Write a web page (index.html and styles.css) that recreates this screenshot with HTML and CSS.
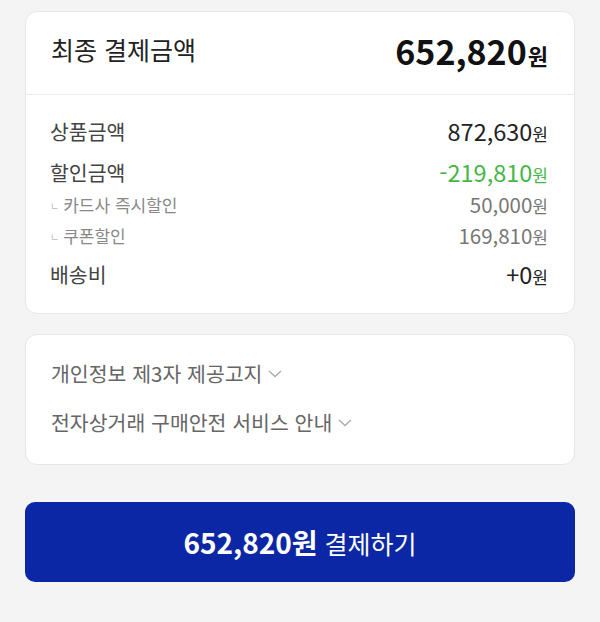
FILE: index.html
```html
<!DOCTYPE html>
<html lang="ko">
<head>
    <meta charset="UTF-8">
    <meta name="viewport" content="width=device-width, initial-scale=1.0">
    <title>결제하기</title>
    <link rel="stylesheet" href="styles.css">
</head>
<body>
    <div class="page">
        <div class="card">
            <div class="total">
                <span class="total-label">최종 결제금액</span>
                <span class="total-price">652,820<em>원</em></span>
            </div>
            <div class="detail">
                <div class="row">
                    <span>상품금액</span>
                    <span class="num">872,630<em>원</em></span>
                </div>
                <div class="row">
                    <span>할인금액</span>
                    <span class="num green">-219,810<em>원</em></span>
                </div>
                <div class="row sub">
                    <span><i class="mark">ㄴ</i>카드사 즉시할인</span>
                    <span class="num">50,000<em>원</em></span>
                </div>
                <div class="row sub">
                    <span><i class="mark">ㄴ</i>쿠폰할인</span>
                    <span class="num">169,810<em>원</em></span>
                </div>
                <div class="row ship">
                    <span>배송비</span>
                    <span class="num">+0<em>원</em></span>
                </div>
            </div>
        </div>

        <div class="card notice">
            <div class="notice-item">개인정보 제3자 제공고지
                <svg class="arrow" viewBox="0 0 14 8" width="14" height="8"><path d="M1 1 L7 6.5 L13 1" fill="none" stroke="#aaa" stroke-width="1.3"/></svg>
            </div>
            <div class="notice-item">전자상거래 구매안전 서비스 안내
                <svg class="arrow" viewBox="0 0 14 8" width="14" height="8"><path d="M1 1 L7 6.5 L13 1" fill="none" stroke="#aaa" stroke-width="1.3"/></svg>
            </div>
        </div>

        <button class="pay-btn"><b>652,820원</b> 결제하기</button>
    </div>
</body>
</html>
```

FILE: styles.css
```css
*{
    padding: 0;
    margin: 0;
    box-sizing: border-box;
}
body{
    background: #f4f4f4;
    font-family: "Noto Sans CJK KR", "Noto Sans", sans-serif;
    color: #222;
}
em, i{
    font-style: normal;
}
.page{
    padding: 11px 25px;
    display: flex;
    flex-direction: column;
}
.card{
    background: #fff;
    border: 1px solid #e6e6e6;
    border-radius: 12px;
}
.total{
    height: 83px;
    display: flex;
    align-items: center;
    justify-content: space-between;
    padding: 0 26px 8px 25px;
    border-bottom: 1px solid #ececec;
}
.total-label{
    font-size: 25px;
    color: #222;
}
.total-price{
    font-size: 34px;
    font-weight: 700;
    color: #111;
    margin-top: 3px;
}
.total-price em{
    font-size: 22px;
    margin-left: 1px;
}
.detail{
    padding: 21px 26px 24px 24px;
}
.row{
    display: flex;
    justify-content: space-between;
    align-items: center;
    height: 30px;
    font-size: 20.5px;
    color: #444;
}
.row + .row{
    margin-top: 11px;
}
.row.sub{
    height: 28px;
    font-size: 17px;
    color: #888;
    margin-top: 3px;
}
.row.ship{
    margin-top: 10px;
}
.num{
    font-size: 23.5px;
    color: #222;
}
.num em{
    font-size: 17px;
}
.sub .num{
    font-size: 20.5px;
    color: #777;
}
.sub .num em{
    font-size: 17px;
}
.num.green{
    color: #46b649;
}
.mark{
    font-size: 10px;
    color: #bbb;
    margin-right: 4px;
    vertical-align: 2px;
}
.notice{
    margin-top: 20px;
    padding: 22px 25px 26px;
}
.notice-item{
    font-size: 20.5px;
    color: #666;
    height: 32px;
    display: flex;
    align-items: center;
}
.notice-item + .notice-item{
    margin-top: 17px;
}
.arrow{
    margin-left: 6px;
    margin-top: 2px;
}
.pay-btn{
    margin-top: 37px;
    height: 80px;
    border: none;
    border-radius: 10px;
    background: #0b27a6;
    color: #fff;
    font-family: inherit;
    font-size: 25px;
}
.pay-btn b{
    font-size: 28px;
    font-weight: 700;
}
```
